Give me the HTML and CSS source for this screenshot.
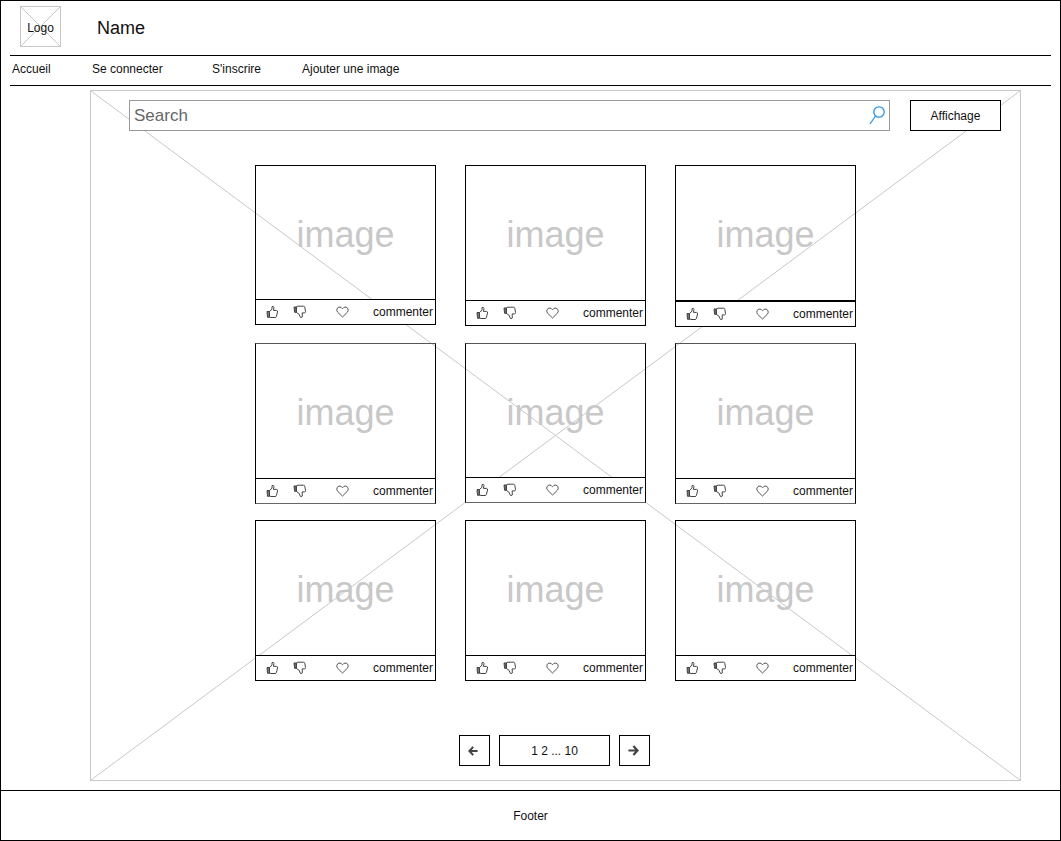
FILE: index.html
```html
<!DOCTYPE html>
<html lang="fr">
<head>
<meta charset="utf-8">
<meta name="viewport" content="width=device-width, initial-scale=1">
<title>Name</title>
<link rel="stylesheet" href="styles.css">
</head>
<body>
<svg class="sprite" aria-hidden="true">
  <symbol id="up" viewBox="0 0 13 14">
    <path d="M3.5 6.5 6 4.2V1.6Q7.8.8 8 2.6L7.4 5.4H10.6Q11.8 5.6 11.5 7L10.4 11.6Q10.1 12.5 9 12.5H5L3.5 11.8Z" fill="none" stroke="#444"/>
    <path d="M1 6.5H3.5V12.3H1.5Z" fill="#777" stroke="#444"/>
  </symbol>
  <symbol id="down" viewBox="0 0 14 14">
    <path d="M3.5 1.8 5 1.2H10.5Q11.6 1.2 11.8 2.3L12.5 6.5Q12.6 7.8 11.4 7.9H9.2L9.3 12Q8 13.4 7 11.8L6.2 9.4 3.5 7.5Z" fill="none" stroke="#444"/>
    <path d="M1 2H3.5V7.3H1.6Z" fill="#666" stroke="#444"/>
  </symbol>
  <symbol id="heart" viewBox="0 0 13 12">
    <path d="M6.5 11 1.6 6.2Q.1 4.4 1.2 2.4 2.8.1 5.1 1.4L6.5 2.8 7.9 1.4Q10.2.1 11.8 2.4 12.9 4.4 11.4 6.2Z" fill="none" stroke="#555"/>
  </symbol>
</svg>
<div class="page">
  <header class="header">
    <div class="brand">
      <div class="logo">
        <svg class="cross" viewBox="0 0 100 100" preserveAspectRatio="none" aria-hidden="true"><path d="M0 0 100 100M100 0 0 100"/></svg>
        <span class="logo-text">Logo</span>
      </div>
      <h1 class="name">Name</h1>
    </div>
    <nav class="nav">
      <a href="#">Accueil</a>
      <a href="#">Se connecter</a>
      <a href="#">S'inscrire</a>
      <a href="#">Ajouter une image</a>
    </nav>
  </header>
  <main class="gallery">
    <svg class="cross" viewBox="0 0 100 100" preserveAspectRatio="none" aria-hidden="true"><path d="M0 0 100 100M100 0 0 100"/></svg>
    <form class="toolbar">
      <div class="search">
        <input class="search-input" type="text" placeholder="Search" aria-label="Search">
        <button class="search-button" type="button" aria-label="Rechercher"><svg width="16" height="19" viewBox="0 0 16 19" fill="none" stroke="#2a93e0" stroke-width="1.3"><circle cx="10" cy="6" r="5.2"/><path d="M6.5 10 1 18"/></svg></button>
      </div>
      <button class="display" type="button">Affichage</button>
    </form>
    <div class="cards">
      <article class="card"><div class="picture short">image</div><div class="actions"><button class="icon" aria-label="J'aime"><svg width="13" height="14"><use href="#up"/></svg></button><button class="icon" aria-label="Je n'aime pas"><svg width="14" height="14"><use href="#down"/></svg></button><button class="icon favorite" aria-label="Favori"><svg width="13" height="12"><use href="#heart"/></svg></button><button class="comment">commenter</button></div></article>
      <article class="card"><div class="picture">image</div><div class="actions"><button class="icon" aria-label="J'aime"><svg width="13" height="14"><use href="#up"/></svg></button><button class="icon" aria-label="Je n'aime pas"><svg width="14" height="14"><use href="#down"/></svg></button><button class="icon favorite" aria-label="Favori"><svg width="13" height="12"><use href="#heart"/></svg></button><button class="comment">commenter</button></div></article>
      <article class="card"><div class="picture ruled">image</div><div class="actions"><button class="icon" aria-label="J'aime"><svg width="13" height="14"><use href="#up"/></svg></button><button class="icon" aria-label="Je n'aime pas"><svg width="14" height="14"><use href="#down"/></svg></button><button class="icon favorite" aria-label="Favori"><svg width="13" height="12"><use href="#heart"/></svg></button><button class="comment">commenter</button></div></article>
      <article class="card soft"><div class="picture">image</div><div class="actions"><button class="icon" aria-label="J'aime"><svg width="13" height="14"><use href="#up"/></svg></button><button class="icon" aria-label="Je n'aime pas"><svg width="14" height="14"><use href="#down"/></svg></button><button class="icon favorite" aria-label="Favori"><svg width="13" height="12"><use href="#heart"/></svg></button><button class="comment">commenter</button></div></article>
      <article class="card soft"><div class="picture short">image</div><div class="actions"><button class="icon" aria-label="J'aime"><svg width="13" height="14"><use href="#up"/></svg></button><button class="icon" aria-label="Je n'aime pas"><svg width="14" height="14"><use href="#down"/></svg></button><button class="icon favorite" aria-label="Favori"><svg width="13" height="12"><use href="#heart"/></svg></button><button class="comment">commenter</button></div></article>
      <article class="card soft"><div class="picture">image</div><div class="actions"><button class="icon" aria-label="J'aime"><svg width="13" height="14"><use href="#up"/></svg></button><button class="icon" aria-label="Je n'aime pas"><svg width="14" height="14"><use href="#down"/></svg></button><button class="icon favorite" aria-label="Favori"><svg width="13" height="12"><use href="#heart"/></svg></button><button class="comment">commenter</button></div></article>
      <article class="card"><div class="picture">image</div><div class="actions"><button class="icon" aria-label="J'aime"><svg width="13" height="14"><use href="#up"/></svg></button><button class="icon" aria-label="Je n'aime pas"><svg width="14" height="14"><use href="#down"/></svg></button><button class="icon favorite" aria-label="Favori"><svg width="13" height="12"><use href="#heart"/></svg></button><button class="comment">commenter</button></div></article>
      <article class="card"><div class="picture">image</div><div class="actions"><button class="icon" aria-label="J'aime"><svg width="13" height="14"><use href="#up"/></svg></button><button class="icon" aria-label="Je n'aime pas"><svg width="14" height="14"><use href="#down"/></svg></button><button class="icon favorite" aria-label="Favori"><svg width="13" height="12"><use href="#heart"/></svg></button><button class="comment">commenter</button></div></article>
      <article class="card"><div class="picture">image</div><div class="actions"><button class="icon" aria-label="J'aime"><svg width="13" height="14"><use href="#up"/></svg></button><button class="icon" aria-label="Je n'aime pas"><svg width="14" height="14"><use href="#down"/></svg></button><button class="icon favorite" aria-label="Favori"><svg width="13" height="12"><use href="#heart"/></svg></button><button class="comment">commenter</button></div></article>
    </div>
    <div class="pagination">
      <button class="page-step" aria-label="Page précédente"><svg width="10" height="10" viewBox="0 0 10 10" fill="none" stroke="#444" stroke-width="2"><path d="M5.2.8 1.4 5 5.2 9.2M1.6 5H9.6"/></svg></button>
      <button class="page-list">1 2 ... 10</button>
      <button class="page-step" aria-label="Page suivante"><svg width="11" height="11" viewBox="0 0 11 11" fill="none" stroke="#444" stroke-width="2.2"><path d="M5.4.9 9.5 5.5 5.4 10.1M9.3 5.5H.4"/></svg></button>
    </div>
  </main>
  <footer class="footer">Footer</footer>
</div>
</body>
</html>
```

FILE: styles.css
```css
* {
  box-sizing: border-box;
}

body {
  margin: 0;
  background: #fff;
  color: #111;
  font: 12px/14px "Liberation Sans", Arial, sans-serif;
}

button {
  margin: 0;
  padding: 0;
  border: 0;
  background: #fff;
  color: inherit;
  font: inherit;
  cursor: pointer;
}

svg {
  display: block;
}

.sprite {
  position: absolute;
  width: 0;
  height: 0;
}

.page {
  display: flex;
  flex-direction: column;
  min-height: 100vh;
  border: 1px solid #000;
}

.header {
  padding: 0 9px;
}

.brand {
  display: flex;
  align-items: center;
  gap: 36px;
  height: 54px;
  padding: 0 10px 4px;
}

.logo {
  position: relative;
  display: grid;
  place-items: center;
  width: 41px;
  height: 41px;
  border: 1px solid #c8c8c8;
}

.logo-text {
  position: relative;
  padding-top: 4px;
}

.cross {
  position: absolute;
  inset: 0;
  width: 100%;
  height: 100%;
}

.cross path {
  fill: none;
  stroke: #c8c8c8;
  vector-effect: non-scaling-stroke;
}

.name {
  margin: 0;
  padding-top: 4px;
  font-size: 18px;
  font-weight: 400;
  line-height: 20px;
}

.nav {
  display: grid;
  grid-template-columns: 80px 120px 90px auto;
  align-items: center;
  height: 31px;
  padding: 0 2px 3px;
  border-top: 1px solid #000;
  border-bottom: 1px solid #000;
}

.nav a {
  color: inherit;
  text-decoration: none;
}

.gallery {
  position: relative;
  display: flex;
  flex: 1;
  flex-direction: column;
  margin: 4px 39px 9px 89px;
  border: 1px solid #c8c8c8;
}

.toolbar {
  position: relative;
  display: flex;
  gap: 20px;
  padding: 9px 19px 0 38px;
}

.search {
  display: flex;
  flex: 1;
  height: 31px;
  border: 1px solid #999;
  background: #fff;
}

.search-input {
  flex: 1;
  min-width: 0;
  padding: 0 4px;
  border: 0;
  outline: 0;
  background: none;
  color: #666;
  font: 17px/20px "Liberation Sans", Arial, sans-serif;
}

.search-input::placeholder {
  color: #666;
  opacity: 1;
}

.search-button {
  display: grid;
  place-items: center;
  width: 24px;
}

.display {
  width: 91px;
  border: 1px solid #000;
}

.cards {
  position: relative;
  display: grid;
  grid-template-columns: repeat(3, 181px);
  justify-content: center;
  align-items: start;
  gap: 16px 29px;
  padding-top: 34px;
}

.card {
  border: 1px solid #000;
}

.soft {
  border-top-color: #555;
  border-bottom-color: #666;
}

.picture {
  display: grid;
  place-items: center;
  height: 134px;
  padding-top: 4px;
  color: #c8c8c8;
  font-size: 36px;
  line-height: 40px;
}

.short {
  height: 133px;
}

.ruled {
  height: 135px;
  border-bottom: 1px solid #000;
}

.actions {
  display: flex;
  align-items: center;
  height: 25px;
  padding: 0 2px 0 10px;
  border-top: 1px solid #000;
  background: #fff;
}

.icon + .icon {
  margin-left: 14px;
}

.icon + .favorite {
  margin-left: 29px;
}

.comment {
  margin-left: auto;
}

.pagination {
  position: relative;
  display: flex;
  justify-content: center;
  gap: 9px;
  margin-top: auto;
  padding: 14px 2px 14px 0;
}

.page-step,
.page-list {
  display: grid;
  place-items: center;
  height: 31px;
  border: 1px solid #000;
}

.page-step {
  width: 31px;
  padding-right: 3px;
}

.page-list {
  width: 111px;
}

.footer {
  display: grid;
  place-items: center;
  height: 50px;
  border-top: 1px solid #000;
}
```
